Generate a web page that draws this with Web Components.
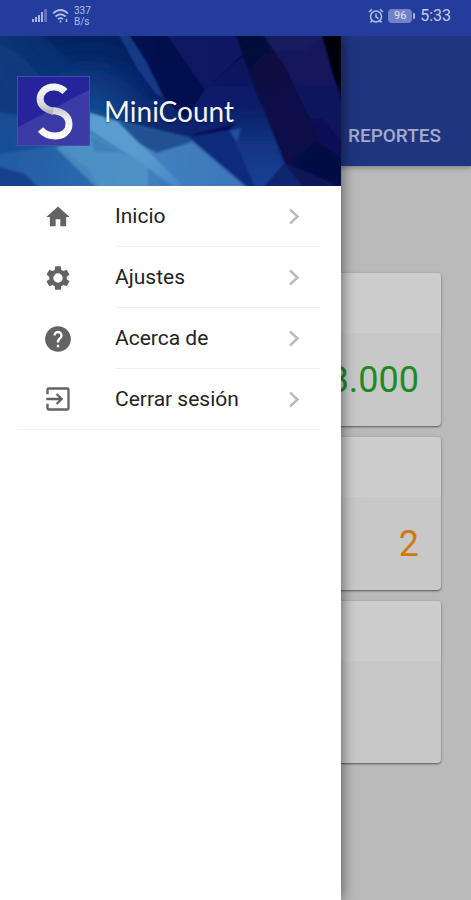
<!DOCTYPE html>
<html lang="es">
<head>
<meta charset="utf-8">
<meta name="viewport" content="width=device-width, initial-scale=1">
<title>MiniCount</title>
<style>
  html, body { margin: 0; min-height: 100%; }
  body { background: #bababa; font-family: Roboto, "Liberation Sans", sans-serif; }
</style>
</head>
<body>
<mini-app></mini-app>

<script>
const define = (name, html) => {
  const template = document.createElement('template');
  template.innerHTML = html;
  customElements.define(name, class extends HTMLElement {
    constructor() {
      super();
      this.attachShadow({ mode: 'open' }).append(template.content.cloneNode(true));
    }
  });
};

define('status-bar', `
  <style>
    :host { display: flex; align-items: center; justify-content: space-between; height: 36px; box-sizing: border-box;
      padding: 0 20px 4px 32px; background: #243d9c; color: #b4bfe4; }
    .group { display: flex; align-items: center; gap: 4px; }
    .rate { font-size: 10px; line-height: 11px; }
    .battery { display: flex; align-items: center; gap: 1px; }
    .level { width: 24px; height: 14px; border-radius: 4px; background: #7283c4; color: #dfe4f6; font-size: 11px; line-height: 14px; text-align: center; }
    .tip { width: 2px; height: 6px; background: #a9b5df; border-radius: 1px; }
    time { font-size: 16px; line-height: 20px; margin-left: 1px; color: #c3cbea; }
    svg { display: block; }
  </style>
  <div class="group">
    <svg width="16" height="16" viewBox="0 0 16 16" fill="#aab6e0" aria-hidden="true">
      <path d="M0 11h2v3H0zM3 9h2v5H3zM6 7h2v7H6zM9 4h2v10H9z"/><path d="M12 1h3v13h-3z" opacity=".45"/>
    </svg>
    <svg width="18" height="16" viewBox="0 0 18 16" fill="none" stroke="#b4bfe4" stroke-width="1.7" aria-hidden="true">
      <path d="M1 5.500Q8.500-1.500 16 5.500M3.500 8.500Q8.500 4 13.500 8.500M6 11.200Q8.500 9 11 11.200"/>
      <circle cx="8.500" cy="13.500" r="1" fill="#b4bfe4" stroke="none"/><path d="M14.500 11v3" stroke-width="1.500"/>
    </svg>
    <div class="rate">337<br>B/s</div>
  </div>
  <div class="group">
    <svg width="16" height="16" viewBox="0 0 16 16" fill="none" stroke="#b4bfe4" stroke-width="1.500" aria-hidden="true">
      <circle cx="8" cy="8.500" r="5.500"/><path d="M8 5.500V9l2.500 1.500M1 4l3-2.700M15 4l-3-2.700M4 12.500l-1.500 2M12 12.500l1.500 2"/>
    </svg>
    <div class="battery"><div class="level">96</div><div class="tip"></div></div>
    <time>5:33</time>
  </div>`);

define('tab-header', `
  <style>
    :host { display: flex; justify-content: flex-end; align-items: flex-end; height: 130px; box-sizing: border-box;
      padding: 0 30px 18px; background: #1f357f; box-shadow: 0 2px 5px rgba(0,0,0,.3); position: relative; }
    button { all: unset; display: block; color: #a4acca; font-size: 19px; line-height: 24px; font-weight: 500; text-transform: uppercase; cursor: pointer; }
  </style>
  <nav><button type="button"><slot></slot></button></nav>`);

define('summary-card', `
  <style>
    :host { display: flex; flex-direction: column; border-radius: 4px; overflow: hidden; background: #c8c8c8;
      box-shadow: 0 1px 2px rgba(0,0,0,.5), 0 0 4px rgba(0,0,0,.08); }
    .head { height: 60px; background: #cdcdcd; }
    .value { min-height: 42px; padding: 26px 22px 25px; text-align: right; font-size: 36px; line-height: 42px; color: var(--value, #333); }
  </style>
  <div class="head"></div>
  <div class="value"><slot></slot></div>`);

define('brand-logo', `
  <style>:host { display: block; width: 73px; height: 70px; } svg { display: block; width: 100%; height: 100%; }</style>
  <svg viewBox="0 0 73 70" role="img" aria-label="Logo">
    <defs><linearGradient id="s" x1="0" y1="0" x2="0" y2="1"><stop offset="0" stop-color="#f6f6f6"/><stop offset=".7" stop-color="#dcdcdf"/><stop offset="1" stop-color="#b5b5bf"/></linearGradient>
    <linearGradient id="b" x1="0" y1="0" x2="0" y2="1"><stop offset="0" stop-color="#d0d0d6"/><stop offset=".3" stop-color="#eee"/><stop offset="1" stop-color="#fff"/></linearGradient></defs>
    <rect x=".5" y=".5" width="72" height="69" fill="#25249b" stroke="#414fae"/>
    <path d="M1 51L72 14v55H1z" fill="#3c3ba6"/>
    <path d="M48 15.500C42.500 10 33 9.500 27.500 14C21.500 19.500 22 27 27 31C29.500 33.300 33 34.500 37 35.500" fill="none" stroke="url(#s)" stroke-width="7"/>
    <path d="M36 34.500C45 35.500 52 40 52 48C52 56 45.500 60 38.500 60C31.500 60 26.500 57 23.500 53.500" fill="none" stroke="url(#b)" stroke-width="7"/>
  </svg>`);

define('drawer-header', `
  <style>
    :host { display: grid; height: 150px; overflow: hidden; background: #07105a; }
    svg, .brand { grid-area: 1 / 1; }
    svg { display: block; width: 100%; height: 150px; }
    .brand { display: flex; align-items: center; gap: 14px; padding: 0 17px; z-index: 1; }
    h1 { margin: 0; font: 400 28px/36px Lato, "Open Sans", sans-serif; color: #f4f6fb; text-shadow: 0 1px 2px rgba(0,0,20,.5); }
  </style>
  <svg viewBox="0 0 341 150" preserveAspectRatio="xMidYMid slice" aria-hidden="true">
    <defs>
      <linearGradient id="bg"><stop offset="0" stop-color="#0b3574"/><stop offset=".3" stop-color="#082569"/><stop offset=".5" stop-color="#071058"/><stop offset="1" stop-color="#0a0b48"/></linearGradient>
      <radialGradient id="glow" gradientUnits="userSpaceOnUse" cx="85" cy="110" r="115"><stop offset="0" stop-color="#1d66ae"/><stop offset=".4" stop-color="#124c93" stop-opacity=".8"/><stop offset="1" stop-color="#0a2f78" stop-opacity="0"/></radialGradient>
      <linearGradient id="ice" gradientUnits="userSpaceOnUse" x1="0" y1="90" x2="240" y2="150"><stop offset="0" stop-color="#154a90"/><stop offset=".35" stop-color="#3c80ba"/><stop offset=".65" stop-color="#417fbd"/><stop offset="1" stop-color="#2458a5"/></linearGradient>
      <linearGradient id="beam" x1="0" y1="0" x2="1" y2="1"><stop offset="0" stop-color="#5d9fd2"/><stop offset=".6" stop-color="#5a99cf"/><stop offset="1" stop-color="#4383c3"/></linearGradient>
      <linearGradient id="mid" x1="0" y1="0" x2="0" y2="1"><stop offset="0" stop-color="#091159"/><stop offset="1" stop-color="#0b2676"/></linearGradient>
      <linearGradient id="low" x1="0" y1="0" x2="1" y2="1"><stop offset="0" stop-color="#0b297b"/><stop offset="1" stop-color="#0c2a7c"/></linearGradient>
      <linearGradient id="blade" x1="0" y1="0" x2="0" y2="1"><stop offset="0" stop-color="#0a185f"/><stop offset=".5" stop-color="#123382"/><stop offset="1" stop-color="#16429a"/></linearGradient>
      <linearGradient id="r" x1="0" y1="0" x2=".6" y2="1"><stop offset="0" stop-color="#060738"/><stop offset=".6" stop-color="#080c4a"/><stop offset="1" stop-color="#060944"/></linearGradient>
      <linearGradient id="panel" x1="0" y1="0" x2="0" y2="1"><stop offset="0" stop-color="#191c5e"/><stop offset=".5" stop-color="#10145c"/><stop offset="1" stop-color="#080d52"/></linearGradient>
      <filter id="soft"><feGaussianBlur stdDeviation="1"/></filter>
    </defs>
    <rect width="341" height="150" fill="url(#bg)"/>
    <g filter="url(#soft)">
      <path d="M40-3H120L145 35L75 30z" fill="#051e58" opacity=".55"/>
      <path d="M-3 6L22 20L45 45L20 90H-3z" fill="#124789" opacity=".4"/>
      <rect width="250" height="150" fill="url(#glow)"/>
      <path d="M118-3H128L147 27L164 62L156 58L137 32z" fill="#1a4390" opacity=".75"/>
      <path d="M128-3H168L207 54L190 88L164 62L147 27z" fill="#060b4e" opacity=".85"/>
      <path d="M165-3H235L243 18L205 54z" fill="#12196a" opacity=".65"/>
      <path d="M205 54L243 20L258 62L243 86L200 96L186 82z" fill="url(#mid)"/>
      <path d="M150 64L164 62L200 96L188 102L120 84z" fill="#0b2c76" opacity=".7"/>
      <path d="M188 101L229 94L256 153H250z" fill="url(#low)"/>
      <path d="M229 94L258 60L285 128L275 153H256z" fill="url(#blade)"/>
      <path d="M229 95L241 92L237 106z" fill="#2b60ae" opacity=".7"/>
      <path d="M262 153L285 126L344 153z" fill="#0c256e"/>
      <path d="M235-3H344V150L285 128L260 62L243 20z" fill="url(#r)"/>
      <path d="M262-3H322L333 40L344 80V125L320 105L285 30z" fill="url(#panel)"/>
      <path d="M284 30L323 2L333 40L344 70V110z" fill="#12155b" opacity=".6"/>
      <path d="M285 128L305 136L344 153H305z" fill="#0a1456"/>
      <path d="M321-3H344V66L333 38z" fill="#02030f"/>
      <path d="M-3 76L30 86L90 77L122 86L188 101L250 153H-3z" fill="url(#ice)"/>
      <path d="M-3 76L60 84L58 110L-3 118z" fill="#174e94" opacity=".8"/>
      <path d="M-3 118L55 111L88 132L100 153H-3z" fill="#255fa5" opacity=".75"/>
      <path d="M-3 130L25 138L40 153H-3z" fill="#173f8b" opacity=".9"/>
      <path d="M56 112L90 98L130 120L148 130V153H98z" fill="#5a9bcc" opacity=".6"/>
      <path d="M90 100L140 126L122 116L95 116z" fill="#3777b2" opacity=".6"/>
      <path d="M90 77L118 86L187 153H176L140 126L90 94z" fill="url(#beam)"/>
      <path d="M118 86L188 101L192 106L157 117L140 108z" fill="#205193"/>
      <path d="M157 117L192 106L248 153H188L148 114z" fill="#4480be" opacity=".8"/>
    </g>
  </svg>
  <div class="brand"><brand-logo></brand-logo><h1><slot></slot></h1></div>`);

define('menu-item', `
  <style>
    :host { display: block; }
    a { display: flex; align-items: center; padding: 0 20px 0 44px; color: #232323; text-decoration: none; }
    ::slotted(svg) { flex: none; width: 28px; height: 28px; fill: #636363; }
    .line { display: flex; flex: 1; align-items: center; justify-content: space-between; height: 60px; margin-left: 43px; padding-right: 15px;
      border-bottom: 1px solid #f1f1f1; font-size: 21px; line-height: 24px; }
    :host([last]) a { margin: 0 20px 0 17px; padding: 0 0 0 27px; border-bottom: 1px solid #f1f1f1; }
    :host([last]) .line { border: 0; }
    .chevron { width: 24px; height: 24px; fill: none; stroke: #bcbcbc; stroke-width: 2.500; }
  </style>
  <a href="#"><slot name="icon"></slot><span class="line"><slot></slot>
    <svg class="chevron" viewBox="0 0 24 24" aria-hidden="true"><path d="M8 5.500l7.500 7L8 19.500"/></svg></span></a>`);

define('side-drawer', `
  <style>
    :host { display: block; background: #fff; box-shadow: 0 0 14px rgba(0,0,0,.6); }
    nav { display: block; }
  </style>
  <slot name="header"></slot><nav><slot></slot></nav>`);

define('mini-app', `
  <style>
    :host { display: flex; flex-direction: column; min-height: 100vh; }
    status-bar { position: relative; z-index: 2; }
    .stage { position: relative; flex: 1; overflow: hidden; }
    main { display: grid; gap: 11px; padding: 107px 30px 40px; }
    side-drawer { position: absolute; top: 0; bottom: 0; left: 0; width: min(341px, 86%); z-index: 1; }
    .sales { --value: #1f8a23; }
    .pending { --value: #d07a0c; }
    .tall { padding-bottom: 9px; }
  </style>
  <status-bar></status-bar>
  <div class="stage">
    <tab-header>Reportes</tab-header>
    <main>
      <summary-card class="sales">8.000</summary-card>
      <summary-card class="pending">2</summary-card>
      <summary-card class="tall"></summary-card>
    </main>
    <side-drawer>
      <drawer-header slot="header">MiniCount</drawer-header>
      <menu-item>Inicio
        <svg slot="icon" viewBox="0 0 24 24"><path d="M10 20v-6h4v6h5v-8h3L12 3 2 12h3v8z"/></svg></menu-item>
      <menu-item>Ajustes
        <svg slot="icon" viewBox="0 0 24 24"><path d="M19.430 12.980c.04-.32.07-.64.07-.98s-.03-.66-.07-.98l2.110-1.650c.19-.15.24-.42.12-.64l-2-3.460c-.12-.22-.39-.3-.61-.22l-2.490 1c-.52-.4-1.080-.73-1.690-.98l-.38-2.650C14.460 2.180 14.250 2 14 2h-4c-.25 0-.46.18-.49.42l-.38 2.650c-.61.25-1.170.59-1.690.98l-2.490-1c-.23-.09-.49 0-.61.22l-2 3.460c-.13.22-.07.49.12.64l2.110 1.650c-.04.32-.07.65-.07.98s.03.66.07.98l-2.110 1.650c-.19.15-.24.42-.12.64l2 3.460c.12.22.39.3.61.22l2.490-1c.52.4 1.080.73 1.690.98l.38 2.650c.03.24.24.42.49.42h4c.25 0 .46-.18.49-.42l.38-2.650c.61-.25 1.170-.59 1.690-.98l2.490 1c.23.09.49 0 .61-.22l2-3.460c.12-.22.07-.49-.12-.64l-2.110-1.650zM12 16a4 4 0 1 1 0-8 4 4 0 0 1 0 8z"/></svg></menu-item>
      <menu-item>Acerca de
        <svg slot="icon" viewBox="0 0 24 24"><path d="M12 1a11 11 0 1 0 0 22 11 11 0 0 0 0-22zm1 18h-2v-2h2v2zm2.070-7.750l-.9.920C13.450 12.900 13 13.500 13 15h-2v-.5c0-1.100.45-2.100 1.170-2.830l1.240-1.260c.37-.36.59-.86.59-1.410a2 2 0 0 0-4 0H8a4 4 0 1 1 8 0c0 .88-.36 1.680-.93 2.250z"/></svg></menu-item>
      <menu-item last>Cerrar sesión
        <svg slot="icon" viewBox="0 0 24 24"><path d="M10.090 15.590L11.500 17l5-5-5-5-1.410 1.410L12.670 11H2v2h10.670l-2.580 2.590zM20 2H4a2 2 0 0 0-2 2v4h2V4h16v16H4v-4H2v4a2 2 0 0 0 2 2h16a2 2 0 0 0 2-2V4a2 2 0 0 0-2-2z"/></svg></menu-item>
    </side-drawer>
  </div>`);
</script>
</body>
</html>
